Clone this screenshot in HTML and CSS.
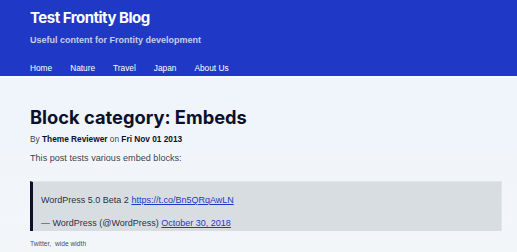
FILE: index.html
```html
<!DOCTYPE html>
<html lang="en">
<head>
    <meta charset="UTF-8">
    <meta name="viewport" content="width=device-width, initial-scale=1.0">
    <title>Test Frontity Blog</title>
    <link rel="stylesheet" href="styles.css">
</head>
<body>
    <header class="header">
        <div class="brand">
            <h2 class="site-title">Test Frontity Blog</h2>
            <p class="site-desc">Useful content for Frontity development</p>
        </div>
        <nav class="nav">
            <a href="#">Home</a>
            <a href="#">Nature</a>
            <a href="#">Travel</a>
            <a href="#">Japan</a>
            <a href="#">About Us</a>
        </nav>
    </header>

    <main class="main">
        <h1 class="post-title">Block category: Embeds</h1>
        <p class="meta">By <b>Theme Reviewer</b> on <b>Fri Nov 01 2013</b></p>
        <p class="intro">This post tests various embed blocks:</p>

        <figure class="embed">
            <blockquote class="tweet">
                <p>WordPress 5.0 Beta 2 <a href="#">https://t.co/Bn5QRqAwLN</a></p>
                <p>— WordPress (@WordPress) <a href="#">October 30, 2018</a></p>
            </blockquote>
            <figcaption class="caption">Twitter,&nbsp; wide width</figcaption>
        </figure>
    </main>
</body>
</html>
```

FILE: styles.css
```css
* {
    margin: 0;
    padding: 0;
    box-sizing: border-box;
}

body {
    font-family: "Liberation Sans", Arial, sans-serif;
    color: rgba(12, 17, 43, 0.85);
    background-color: #eef4fc;
    background-image: linear-gradient(180deg, #eef4fc 0%, #f3f6f9 100%);
    min-height: 100vh;
}

.header {
    background-color: #1f38c5;
    color: white;
    border-bottom: 2px solid #f7faff;
}

.brand {
    padding: 9px 30px 0;
}

.site-title {
    font-family: Inter, "Liberation Sans", sans-serif;
    font-size: 15px;
    font-weight: 700;
    line-height: 18px;
    letter-spacing: -0.5px;
}

.site-desc {
    font-size: 9px;
    font-weight: 700;
    color: rgba(255, 255, 255, 0.75);
    margin-top: 7px;
    line-height: 12px;
}

.nav {
    display: flex;
    gap: 18px;
    padding: 17px 30px 3px;
}

.nav a {
    color: white;
    text-decoration: none;
    font-size: 8.3px;
    line-height: 10px;
}

.main {
    padding: 28px 30px 0;
}

.post-title {
    font-family: Inter, "Liberation Sans", sans-serif;
    font-size: 18.3px;
    font-weight: 700;
    line-height: 22px;
    color: #0c112b;
}

.meta {
    font-size: 8.3px;
    margin-top: 6px;
    line-height: 10px;
}

.meta b {
    color: #0c112b;
}

.intro {
    font-size: 9.1px;
    margin-top: 9px;
    line-height: 11px;
}

.embed {
    margin-top: 17px;
}

.tweet {
    width: 472px;
    height: 50px;
    background-color: #d8dde2;
    border-left: 3px solid #0c112b;
    border-right: 1px solid #e2e6ea;
    border-top: 1px solid #e2e6ea;
    padding: 13px 8px 0;
    font-size: 9px;
    line-height: 11px;
    color: rgba(12, 17, 43, 0.9);
}

.tweet p + p {
    margin-top: 12px;
}

.tweet a {
    color: #1f38c5;
}

.caption {
    font-size: 6.7px;
    line-height: 8px;
    margin-top: 9px;
    color: rgba(12, 17, 43, 0.8);
}
```
